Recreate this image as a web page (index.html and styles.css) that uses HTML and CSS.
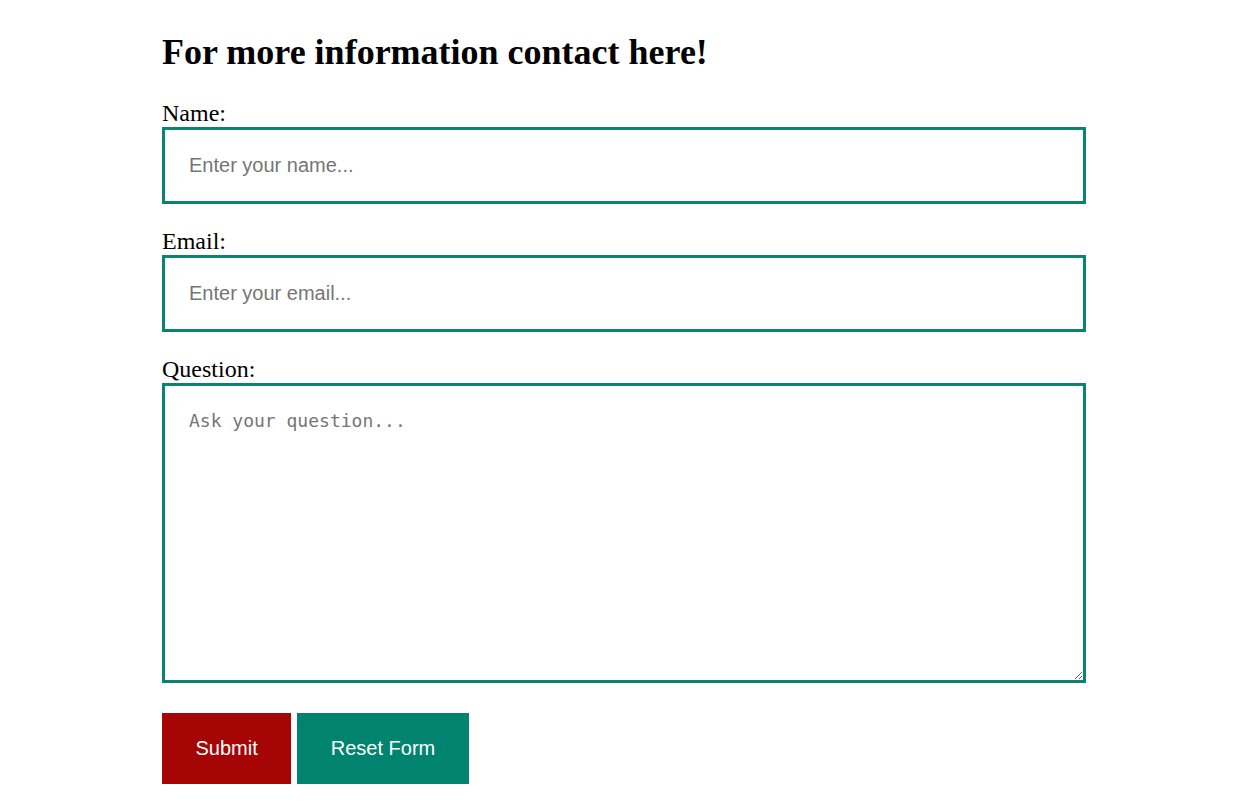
FILE: index.html
```html
<!DOCTYPE html>
<html lang="en">
<head>
<meta charset="utf-8">
<title>Contact</title>
<link rel="stylesheet" href="styles.css">
</head>
<body>
<main class="page">
  <h1 class="title">For more information contact here!</h1>
  <form class="form">
    <label class="label" for="name">Name:</label>
    <input class="field" id="name" type="text" placeholder="Enter your name...">
    <label class="label" for="email">Email:</label>
    <input class="field" id="email" type="email" placeholder="Enter your email...">
    <label class="label" for="question">Question:</label>
    <textarea class="field area" id="question" placeholder="Ask your question..."></textarea>
    <div class="actions">
      <button class="btn btn-submit" type="submit">Submit</button>
      <button class="btn btn-reset" type="reset">Reset Form</button>
    </div>
  </form>
</main>
</body>
</html>
```
FILE: styles.css
```css
html, body {
  margin: 0;
  padding: 0;
  background: #ffffff;
}

body {
  font-family: "Liberation Serif", "Times New Roman", serif;
  color: #000000;
}

.page {
  width: 924px;
  padding: 32px 0 0 162px;
}

.title {
  margin: 0 0 27px;
  font-size: 36px;
  line-height: 41px;
  font-weight: bold;
}

.form {
  display: flex;
  flex-direction: column;
}

.label {
  display: block;
  font-size: 24px;
  line-height: 27px;
}

.field {
  box-sizing: border-box;
  width: 924px;
  height: 77px;
  margin: 0 0 24px;
  padding: 24px 24px;
  border: 3px solid #0a8471;
  border-radius: 0;
  font-family: "Liberation Sans", Arial, sans-serif;
  font-size: 20px;
  color: #000;
  background: #fff;
  outline: none;
}

.field::placeholder {
  color: #757575;
}

.area {
  height: 300px;
  margin-bottom: 30px;
  padding: 24px;
  font-family: "DejaVu Sans Mono", monospace;
  font-size: 18px;
  line-height: 21px;
  resize: both;
}

.actions {
  display: flex;
  gap: 6px;
}

.btn {
  height: 71px;
  padding: 0 33.5px;
  border: none;
  border-radius: 0;
  font-family: "Liberation Sans", Arial, sans-serif;
  font-size: 20px;
  color: #ffffff;
  cursor: pointer;
}

.btn-submit {
  background: #a60505;
}

.btn-reset {
  background: #00846f;
}
```
